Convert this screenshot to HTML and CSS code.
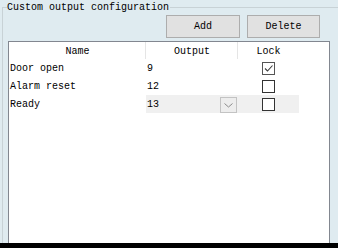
FILE: index.html
```html
<!DOCTYPE html>
<html lang="en">

<head>
  <meta charset="UTF-8" />
  <meta name="viewport" content="width=device-width, initial-scale=1" />
  <title>Custom output configuration</title>
  <link rel="stylesheet" href="styles.css">
</head>

<body>
  <div class="screen">

    <fieldset class="group">
      <legend>Custom output configuration</legend>

      <div class="toolbar">
        <button class="btn btn-add">Add</button>
        <button class="btn btn-delete">Delete</button>
      </div>

      <!-- outputs table -->
      <div class="table">
        <div class="row head">
          <div class="cell col-name">Name</div>
          <div class="cell col-output">Output</div>
          <div class="cell col-lock">Lock</div>
          <div class="cell col-fill"></div>
        </div>

        <div class="row">
          <div class="cell col-name">Door open</div>
          <div class="cell col-output">9</div>
          <div class="cell col-lock"><span class="check checked">
            <svg width="11" height="11" viewBox="0 0 11 11"><path d="M2 5.5 L4.5 8 L9.5 2.5" fill="none" stroke="#3c3c3c" stroke-width="1.1"/></svg>
          </span></div>
          <div class="cell col-fill"></div>
        </div>

        <div class="row">
          <div class="cell col-name">Alarm reset</div>
          <div class="cell col-output">12</div>
          <div class="cell col-lock"><span class="check"></span></div>
          <div class="cell col-fill"></div>
        </div>

        <div class="row editing">
          <div class="cell col-name">Ready</div>
          <div class="cell col-output combo">
            <span class="value">13</span>
            <span class="drop-btn">
              <svg width="9" height="5" viewBox="0 0 9 5"><path d="M0.5 0.5 L4.5 4 L8.5 0.5" fill="none" stroke="#8a8a8a" stroke-width="1"/></svg>
            </span>
          </div>
          <div class="cell col-lock"><span class="check"></span></div>
          <div class="cell col-fill"></div>
        </div>
      </div>
    </fieldset>

    <div class="taskbar"></div>

  </div>
</body>

</html>
```

FILE: styles.css
```css
* {
  box-sizing: border-box;
  font-family: 'Liberation Mono', 'DejaVu Sans Mono', monospace;
}

body {
  margin: 0;
  background-color: #dfebf0;
  color: #000;
  font-size: 10px;
}

.screen {
  height: 248px;
  padding-top: 1px;
  display: flex;
  flex-direction: column;
  overflow: hidden;
}

.group {
  flex: 1;
  min-width: 0;
  margin: 0 0 0 2px;
  padding: 0;
  border: 1px solid #c8d2d6;
  border-right: none;
  border-bottom: none;
  overflow: hidden;
}

.group legend {
  margin-left: 4px;
  padding: 0 1px 0 0;
  height: 13px;
  line-height: 13px;
}

.toolbar {
  display: flex;
  justify-content: flex-end;
  gap: 7px;
  margin-top: 1px;
  padding-right: 18px;
}

.btn {
  height: 23px;
  padding: 0;
  font-size: 10px;
  color: #000;
  background-color: #e1e1e1;
  border: 1px solid #adadad;
  border-radius: 0;
}

.btn-add {
  width: 74px;
}

.btn-delete {
  width: 73px;
}

.table {
  width: 322px;
  height: 220px;
  margin: 3px 0 0 5px;
  background-color: #fff;
  border: 1px solid #828790;
  border-bottom: none;
}

.row {
  display: grid;
  grid-template-columns: 137px 92px 61px 1fr;
  height: 18px;
  line-height: 16px;
}

.row.head {
  height: 17px;
}

.cell {
  white-space: nowrap;
  overflow: hidden;
  padding-top: 2px;
}

.head .cell {
  text-align: center;
  padding-top: 3px;
  line-height: 14px;
}

.head .col-name,
.head .col-output {
  border-right: 1px solid #e5e5e5;
}

.col-name {
  padding-left: 1px;
}

.row .col-output {
  padding-left: 1px;
}

.col-lock {
  display: flex;
  justify-content: center;
  align-items: flex-start;
  padding-top: 3px;
}

.head .col-lock {
  display: block;
}

.check {
  width: 13px;
  height: 13px;
  border: 1px solid #333;
  background-color: #fff;
  display: flex;
  align-items: center;
  justify-content: center;
}

.check.checked {
  border-color: #555;
}

.editing .col-output,
.editing .col-lock {
  background-color: #f0f0f0;
}

.combo {
  display: flex;
  justify-content: space-between;
  align-items: flex-start;
  padding-top: 0;
}

.combo .value {
  padding-top: 2px;
}

.drop-btn {
  width: 17px;
  height: 16px;
  margin: 2px 1px 0 0;
  border: 1px solid #c3c3c3;
  background-color: #ededed;
  display: flex;
  align-items: center;
  justify-content: center;
}

.taskbar {
  height: 5px;
  flex-shrink: 0;
  background-color: #000;
}
```
